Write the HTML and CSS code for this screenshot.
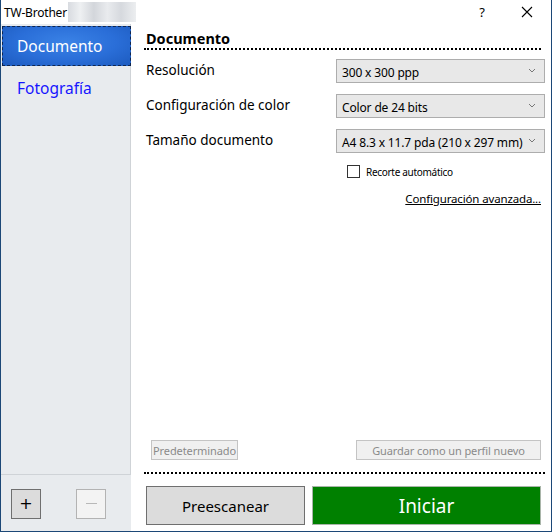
FILE: index.html
```html
<!DOCTYPE html>
<html lang="es">
<head>
<meta charset="utf-8">
<title>TW-Brother</title>
<link rel="stylesheet" href="styles.css">
</head>
<body>
<div class="window">
  <div class="titlebar">
    <span class="title">TW-Brother</span>
    <span class="blur"></span>
    <span class="spacer"></span>
    <span class="help">?</span>
    <span class="close">
      <svg width="12" height="12" viewBox="0 0 12 12"><path d="M1 1L11 11M11 1L1 11" stroke="#000" stroke-width="1.1" fill="none"/></svg>
    </span>
  </div>
  <div class="content">
    <div class="sidebar">
      <div class="nav">
        <div class="nav-item selected"><span>Documento</span></div>
        <div class="nav-item"><span>Fotografía</span></div>
      </div>
      <div class="side-foot">
        <button class="sq-btn">+</button>
        <button class="sq-btn disabled"><span class="minus"></span></button>
      </div>
    </div>
    <div class="main">
      <div class="heading">Documento</div>
      <div class="rows">
        <div class="row">
          <span class="label">Resolución</span>
          <div class="select"><span>300 x 300 ppp</span><svg class="chev" width="8" height="5" viewBox="0 0 8 5"><path d="M1 1L4 4L7 1" stroke="#777" fill="none"/></svg></div>
        </div>
        <div class="row">
          <span class="label">Configuración de color</span>
          <div class="select"><span>Color de 24 bits</span><svg class="chev" width="8" height="5" viewBox="0 0 8 5"><path d="M1 1L4 4L7 1" stroke="#777" fill="none"/></svg></div>
        </div>
        <div class="row">
          <span class="label">Tamaño documento</span>
          <div class="select"><span>A4 8.3 x 11.7 pda (210 x 297 mm)</span><svg class="chev" width="8" height="5" viewBox="0 0 8 5"><path d="M1 1L4 4L7 1" stroke="#777" fill="none"/></svg></div>
        </div>
      </div>
      <div class="check-row">
        <span class="checkbox"></span>
        <span class="check-label">Recorte automático</span>
      </div>
      <div class="link-row"><span class="link">Configuración avanzada...</span></div>
      <div class="grow"></div>
      <div class="profile-row">
        <button class="small-btn">Predeterminado</button>
        <button class="small-btn">Guardar como un perfil nuevo</button>
      </div>
      <div class="action-row">
        <button class="btn-pre">Preescanear</button>
        <button class="btn-start">Iniciar</button>
      </div>
    </div>
  </div>
</div>
</body>
</html>
```
FILE: styles.css
```css
* { box-sizing: border-box; }
html, body { margin: 0; padding: 0; }
body {
  font-family: "Noto Sans", "Open Sans", sans-serif;
  background: #ffffff;
}
.window {
  width: 552px;
  height: 532px;
  display: flex;
  flex-direction: column;
  border: 1px solid #1c4877;
  border-top: none;
  background: #ffffff;
}
.titlebar {
  height: 24px;
  display: flex;
  align-items: center;
  flex: none;
}
.title {
  font-size: 12px;
  color: #000;
  padding-left: 3px;
  letter-spacing: -0.2px;
}
.blur {
  width: 68px;
  height: 20px;
  margin-left: 1px;
  background: linear-gradient(90deg, #d8dbe0 0%, #eef0f2 18%, #d3d6db 38%, #e9ebee 58%, #d6d9de 78%, #eceef0 100%);
}
.spacer { flex: 1; }
.help {
  font-size: 13px;
  width: 14px;
  margin-right: 32px;
  text-align: center;
}
.close {
  width: 12px;
  height: 12px;
  margin-right: 18px;
  display: flex;
}
.content {
  flex: 1;
  display: flex;
  min-height: 0;
}
.sidebar {
  width: 130px;
  flex: none;
  display: flex;
  flex-direction: column;
  background: #e8ebee;
}
.nav {
  flex: 1;
  border-right: 1px solid #cfd3d7;
  border-bottom: 1px solid #cfd3d7;
  padding-top: 2px;
}
.nav-item {
  height: 40px;
  display: flex;
  align-items: center;
  padding-left: 15px;
  font-size: 15.5px;
  color: #1515ff;
  margin: 0 0 0 1px;
}
.nav-item + .nav-item { padding-top: 3px; }
.nav-item.selected {
  background: radial-gradient(ellipse at 50% 40%, #3a82e6 0%, #2a6ed8 55%, #1d5bbf 100%);
  color: #ffffff;
  border: 1px dashed #0d2650;
  margin-right: -1px;
  padding-left: 14px;
}
.side-foot {
  height: 56px;
  flex: none;
  display: flex;
  align-items: center;
  padding-left: 10px;
  gap: 35px;
  padding-top: 1px;
}
.sq-btn {
  width: 30px;
  height: 30px;
  border: 1px solid #6f6f6f;
  background: #dcdcdc;
  font-family: "DejaVu Sans", sans-serif;
  font-size: 16px;
  color: #000;
  padding: 0;
  display: flex;
  align-items: center;
  justify-content: center;
}
.sq-btn.disabled {
  background: #f3f3f3;
  border-color: #b3b3b3;
}
.minus {
  width: 11px;
  height: 1px;
  background: #b8b8b8;
}
.main {
  flex: 1;
  display: flex;
  flex-direction: column;
  padding: 5px 6px 6px 13px;
}
.heading {
  font-weight: bold;
  font-size: 14.5px;
  color: #000;
  padding-left: 2px;
  line-height: 19px;
  border-bottom: 2px dotted #000;
  margin-right: 4px;
}
.rows {
  display: flex;
  flex-direction: column;
  gap: 11px;
  margin-top: 9px;
}
.row {
  display: flex;
  align-items: flex-start;
  height: 24px;
}
.label {
  width: 192px;
  padding-left: 2px;
  font-size: 13.5px;
  line-height: 20px;
  margin-top: 1px;
  color: #000;
  white-space: nowrap;
}
.select {
  flex: 1;
  height: 24px;
  background: #e8e8e8;
  border: 1px solid #adadad;
  display: flex;
  align-items: center;
  justify-content: space-between;
  padding: 2px 8px 0 5px;
  font-size: 12px;
  letter-spacing: -0.15px;
  color: #000;
  white-space: nowrap;
}
.chev { margin-top: -3px; flex: none; }
.check-row {
  display: flex;
  align-items: center;
  margin-top: 12px;
  padding-left: 203px;
  height: 13px;
}
.checkbox {
  width: 13px;
  height: 13px;
  border: 1px solid #333;
  background: #fff;
}
.check-label {
  font-size: 10px;
  letter-spacing: -0.3px;
  margin-left: 6px;
  color: #000;
}
.link-row {
  display: flex;
  justify-content: flex-end;
  margin-top: 13px;
  padding-right: 4px;
}
.link {
  font-size: 11.5px;
  text-decoration: underline;
  color: #000;
  letter-spacing: -0.15px;
}
.grow { flex: 1; }
.profile-row {
  display: flex;
  justify-content: space-between;
  padding: 0 4px 12px 7px;
  border-bottom: 2px dotted #000;
}
.small-btn {
  height: 20px;
  font-family: "Noto Sans", "Open Sans", sans-serif;
  font-size: 11px;
  letter-spacing: -0.1px;
  color: #8a8a8a;
  background: #f0f0f0;
  border: 1px solid #c4c4c4;
  padding: 0 1px;
}
.small-btn + .small-btn {
  width: 185px;
}
.action-row {
  display: flex;
  gap: 7px;
  margin-top: 12px;
  padding-left: 2px;
  padding-right: 4px;
}
.btn-pre {
  width: 159px;
  height: 39px;
  background: #dcdcdc;
  border: 1px solid #6f6f6f;
  font-family: "Noto Sans", "Open Sans", sans-serif;
  font-size: 15px;
  color: #000;
}
.btn-start {
  flex: 1;
  height: 39px;
  background: #008000;
  border: 1px solid #a9b5a9;
  font-family: "Noto Sans", "Open Sans", sans-serif;
  font-size: 19px;
  color: #fff;
}
```
